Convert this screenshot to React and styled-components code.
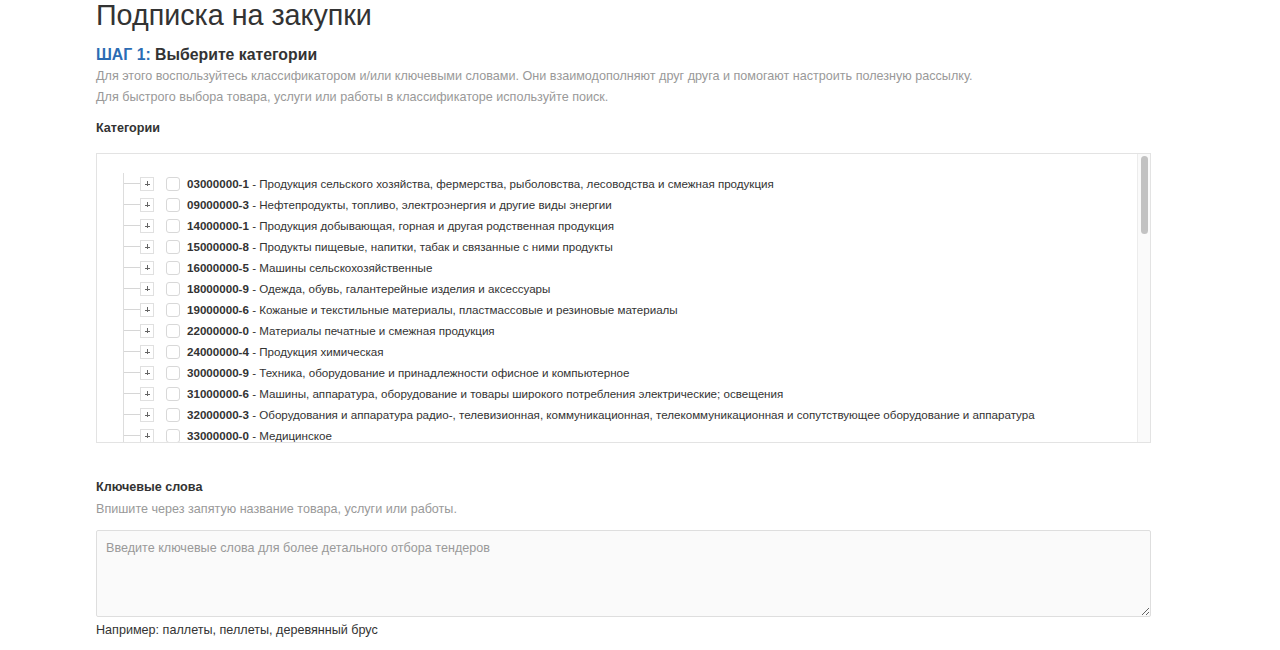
import React from "react";
import styled, { createGlobalStyle } from "styled-components";

const GlobalStyle = createGlobalStyle`
  body {
    margin: 0;
    background: #fff;
    font-family: "Liberation Sans", Arial, sans-serif;
    color: #333;
  }
`;

const categories = [
  ["03000000-1", "Продукция сельского хозяйства, фермерства, рыболовства, лесоводства и смежная продукция"],
  ["09000000-3", "Нефтепродукты, топливо, электроэнергия и другие виды энергии"],
  ["14000000-1", "Продукция добывающая, горная и другая родственная продукция"],
  ["15000000-8", "Продукты пищевые, напитки, табак и связанные с ними продукты"],
  ["16000000-5", "Машины сельскохозяйственные"],
  ["18000000-9", "Одежда, обувь, галантерейные изделия и аксессуары"],
  ["19000000-6", "Кожаные и текстильные материалы, пластмассовые и резиновые материалы"],
  ["22000000-0", "Материалы печатные и смежная продукция"],
  ["24000000-4", "Продукция химическая"],
  ["30000000-9", "Техника, оборудование и принадлежности офисное и компьютерное"],
  ["31000000-6", "Машины, аппаратура, оборудование и товары широкого потребления электрические; освещения"],
  ["32000000-3", "Оборудования и аппаратура радио-, телевизионная, коммуникационная, телекоммуникационная и сопутствующее оборудование и аппаратура"],
  ["33000000-0", "Медицинское"],
  ["34000000-7", "Транспортное оборудование и вспомогательное оборудование к нему"],
  ["35000000-4", "Оборудование для обеспечения безопасности, противопожарное, полицейское и оборонное"],
];

const Page = styled.main`
  width: 1055px;
  margin-left: 96px;
  padding-top: 2px;
`;

const Title = styled.h1`
  margin: 0;
  font-size: 28.7px;
  font-weight: 400;
  line-height: 26px;
  color: #333;
`;

const StepTitle = styled.h2`
  margin: 17px 0 0;
  font-size: 15.8px;
  font-weight: 700;
  line-height: 20px;
  color: #333;
`;

const StepNumber = styled.span`
  color: #2b6cb4;
`;

const Hint = styled.p`
  margin: ${(p) => p.$top || 0}px 0 0;
  font-size: 12.6px;
  line-height: 21px;
  color: #999;
`;

const Label = styled.h3`
  margin: ${(p) => p.$top || 0}px 0 0;
  font-size: 12.6px;
  font-weight: 700;
  line-height: 18px;
  color: #333;
`;

const TreeBox = styled.div`
  display: flex;
  margin-top: 16px;
  height: 288px;
  border: 1px solid #e3e3e3;
  background: #fff;
  overflow: hidden;
`;

const TreeView = styled.div`
  flex: 1;
  min-width: 0;
  overflow: hidden;
`;

const ScrollTrack = styled.div`
  flex: none;
  width: 13px;
  box-sizing: border-box;
  padding: 2px 2px 0 3px;
  background: #fafafa;
  border-left: 1px solid #ececec;
`;

const ScrollThumb = styled.div`
  height: 78px;
  border-radius: 4px;
  background: #c2c2c2;
`;

const TreeList = styled.ul`
  list-style: none;
  margin: 19px 0 0 26px;
  padding: 0;
  border-left: 1px solid #ddd;
`;

const TreeRow = styled.li`
  display: flex;
  align-items: center;
  height: 21px;
  font-size: 11.6px;
  color: #333;
  white-space: nowrap;
`;

const Branch = styled.span`
  width: 16px;
  height: 1px;
  background: #d6d6d6;
  flex: none;
`;

const Toggle = styled.span`
  flex: none;
  position: relative;
  width: 12px;
  height: 12px;
  border: 1px solid #e0e0e0;
  margin-right: 12px;

  &::before,
  &::after {
    content: "";
    position: absolute;
    left: 50%;
    top: 50%;
    background: #666;
  }
  &::before {
    width: 5px;
    height: 1px;
    margin: 0 0 0 -2.5px;
  }
  &::after {
    width: 1px;
    height: 5px;
    margin: -2.5px 0 0 -0.5px;
  }
`;

const Check = styled.span`
  flex: none;
  width: 12px;
  height: 12px;
  border: 1px solid #d8d8d8;
  border-radius: 3px;
  background: #fff;
  margin-right: 7px;
`;

const Code = styled.b`
  font-weight: 700;
`;

const TextArea = styled.textarea`
  display: block;
  box-sizing: border-box;
  width: 100%;
  height: 87px;
  margin-top: 10px;
  padding: 10px 9px;
  border: 1px solid #dedede;
  border-radius: 2px;
  background: #fafafa;
  font-family: "Liberation Sans", Arial, sans-serif;
  font-size: 12.6px;
  color: #333;
  resize: vertical;
  outline: none;

  &::placeholder {
    color: #999;
  }
`;

const Example = styled.p`
  margin: 4px 0 0;
  font-size: 12.6px;
  line-height: 18px;
  color: #333;
`;

export default function App() {
  return (
    <>
      <GlobalStyle />
      <Page>
        <Title>Подписка на закупки</Title>
        <StepTitle>
          <StepNumber>ШАГ 1:</StepNumber> Выберите категории
        </StepTitle>
        <Hint $top={1}>
          Для этого воспользуйтесь классификатором и/или ключевыми словами. Они взаимодополняют друг друга и помогают настроить полезную рассылку.
        </Hint>
        <Hint>Для быстрого выбора товара, услуги или работы в классификаторе используйте поиск.</Hint>
        <Label $top={11}>Категории</Label>
        <TreeBox>
          <TreeView>
            <TreeList>
              {categories.map(([code, name]) => (
                <TreeRow key={code}>
                  <Branch />
                  <Toggle />
                  <Check />
                  <Code>{code}</Code>&nbsp;- {name}
                </TreeRow>
              ))}
            </TreeList>
          </TreeView>
          <ScrollTrack>
            <ScrollThumb />
          </ScrollTrack>
        </TreeBox>
        <Label $top={35}>Ключевые слова</Label>
        <Hint $top={3}>Впишите через запятую название товара, услуги или работы.</Hint>
        <TextArea placeholder="Введите ключевые слова для более детального отбора тендеров" />
        <Example>Например: паллеты, пеллеты, деревянный брус</Example>
      </Page>
    </>
  );
}
